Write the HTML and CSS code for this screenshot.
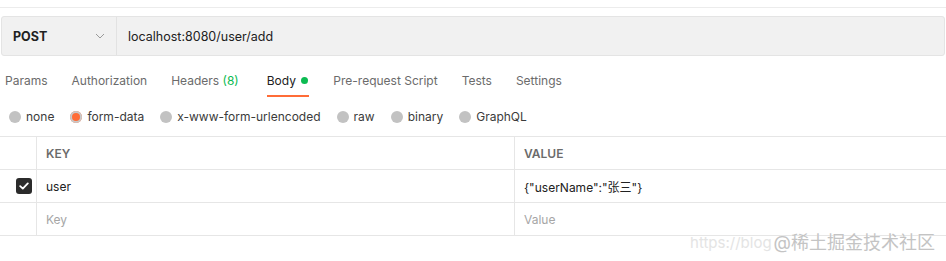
FILE: index.html
```html
<!DOCTYPE html>
<html lang="zh-CN">
<head>
    <meta charset="UTF-8">
    <title>POST localhost:8080/user/add</title>
    <link rel="stylesheet" href="styles.css">
</head>
<body>
<div class="top-rule"></div>

<div class="req-bar">
    <div class="req-method">
        <span class="req-method-name">POST</span>
        <svg class="req-chevron" width="10" height="6" viewBox="0 0 10 6">
            <path d="M1 1 L5 5 L9 1" fill="none" stroke="#9a9a9a" stroke-width="1"/>
        </svg>
    </div>
    <div class="req-url">localhost:8080/user/add</div>
</div>

<div class="tabs">
    <span class="tab">Params</span>
    <span class="tab">Authorization</span>
    <span class="tab tab-headers">Headers <span class="tab-count">(8)</span></span>
    <span class="tab tab-active">Body <span class="tab-dot"></span></span>
    <span class="tab">Pre-request Script</span>
    <span class="tab">Tests</span>
    <span class="tab">Settings</span>
</div>

<div class="body-types">
    <label class="radio"><span class="radio-dot"></span>none</label>
    <label class="radio"><span class="radio-dot checked"></span>form-data</label>
    <label class="radio"><span class="radio-dot"></span>x-www-form-urlencoded</label>
    <label class="radio"><span class="radio-dot"></span>raw</label>
    <label class="radio"><span class="radio-dot"></span>binary</label>
    <label class="radio"><span class="radio-dot"></span>GraphQL</label>
</div>

<div class="kv-table">
    <div class="kv-row kv-head">
        <div class="kv-check"></div>
        <div class="kv-key">KEY</div>
        <div class="kv-value">VALUE</div>
    </div>
    <div class="kv-row">
        <div class="kv-check">
            <span class="checkbox">
                <svg width="10" height="8" viewBox="0 0 10 8">
                    <path d="M1.2 4.2 L3.8 6.6 L8.8 1.4" fill="none" stroke="#fff" stroke-width="1.8" stroke-linecap="round" stroke-linejoin="round"/>
                </svg>
            </span>
        </div>
        <div class="kv-key">user</div>
        <div class="kv-value">{"userName":"张三"}</div>
    </div>
    <div class="kv-row kv-empty">
        <div class="kv-check"></div>
        <div class="kv-key">Key</div>
        <div class="kv-value">Value</div>
    </div>
</div>

<div class="watermark"><span class="wm-url">https://blog</span>@稀土掘金技术社区</div>
</body>
</html>
```

FILE: styles.css
```css
:root {
    --pm-orange: #ff6c37;
    --pm-green: #0cbb52;
    --pm-border: #e6e6e6;
    --pm-text: #212121;
    --pm-muted: #6b6b6b;
    --pm-faint: #a6a6a6;
}

* {
    box-sizing: border-box;
}

body {
    margin: 0;
    width: 946px;
    height: 261px;
    overflow: hidden;
    background: #ffffff;
    font-family: Inter, "Noto Sans CJK SC", sans-serif;
    font-size: 12px;
    color: var(--pm-text);
}

.top-rule {
    height: 8px;
    border-bottom: 1px solid #ececec;
}

.req-bar {
    display: flex;
    height: 40px;
    margin: 8px 1px 0 1px;
    background: #f1f1f1;
    border: 1px solid #e4e4e4;
    border-radius: 3px;
}

.req-method {
    display: flex;
    align-items: center;
    justify-content: space-between;
    width: 115px;
    padding: 0 11px 0 11px;
    border-right: 1px solid #e2e2e2;
}

.req-method-name {
    font-weight: 700;
    font-size: 12.5px;
    color: #212121;
}

.req-url {
    display: flex;
    align-items: center;
    padding-left: 11px;
    font-size: 12.5px;
    color: #212121;
}

.tabs {
    display: flex;
    height: 41px;
    padding: 17px 0 0 5px;
    gap: 24px;
}

.tab {
    height: 24px;
    color: var(--pm-muted);
    white-space: nowrap;
}

.tab-headers {
    margin-right: 4px;
}

.tab-count {
    color: var(--pm-green);
}

.tab-active {
    color: var(--pm-text);
    border-bottom: 2px solid var(--pm-orange);
}

.tab-dot {
    display: inline-block;
    width: 7px;
    height: 7px;
    margin-left: 2px;
    margin-right: 1px;
    border-radius: 50%;
    background: var(--pm-green);
    vertical-align: 1px;
}

.body-types {
    display: flex;
    align-items: center;
    height: 39px;
    padding: 1px 0 1px 9px;
    gap: 16px;
}

.radio {
    display: flex;
    align-items: center;
    gap: 5px;
    color: #3b3b3b;
    white-space: nowrap;
}

.radio-dot {
    width: 12px;
    height: 12px;
    border-radius: 50%;
    background: #c2c2c2;
}

.radio-dot.checked {
    background: var(--pm-orange);
    box-shadow: inset 0 0 0 2px #c9c9c9;
}

.kv-table {
    border-top: 1px solid var(--pm-border);
}

.kv-row {
    display: flex;
    height: 33px;
    border-bottom: 1px solid var(--pm-border);
}

.kv-row > div {
    display: flex;
    align-items: center;
}

.kv-check {
    width: 37px;
    justify-content: center;
    padding-left: 11px;
    border-right: 1px solid var(--pm-border);
}

.kv-key {
    width: 478px;
    padding-left: 9px;
    border-right: 1px solid var(--pm-border);
}

.kv-value {
    flex: 1;
    padding-left: 9px;
}

.kv-head {
    font-weight: 600;
    font-size: 12px;
    color: var(--pm-muted);
}

.kv-empty {
    color: var(--pm-faint);
}

.checkbox {
    display: flex;
    align-items: center;
    justify-content: center;
    width: 16px;
    height: 16px;
    border-radius: 3px;
    background: #2b2b2b;
}

.watermark {
    display: flex;
    justify-content: flex-end;
    padding: 0 11px 0 0;
    margin-top: -5px;
    font-size: 18px;
    line-height: 24px;
    color: #c4c4c4;
    text-shadow: 0 0 1px #ffffff;
    white-space: nowrap;
}

.wm-url {
    font-size: 15px;
    color: #e4e4e4;
    margin-right: 2px;
}
```
